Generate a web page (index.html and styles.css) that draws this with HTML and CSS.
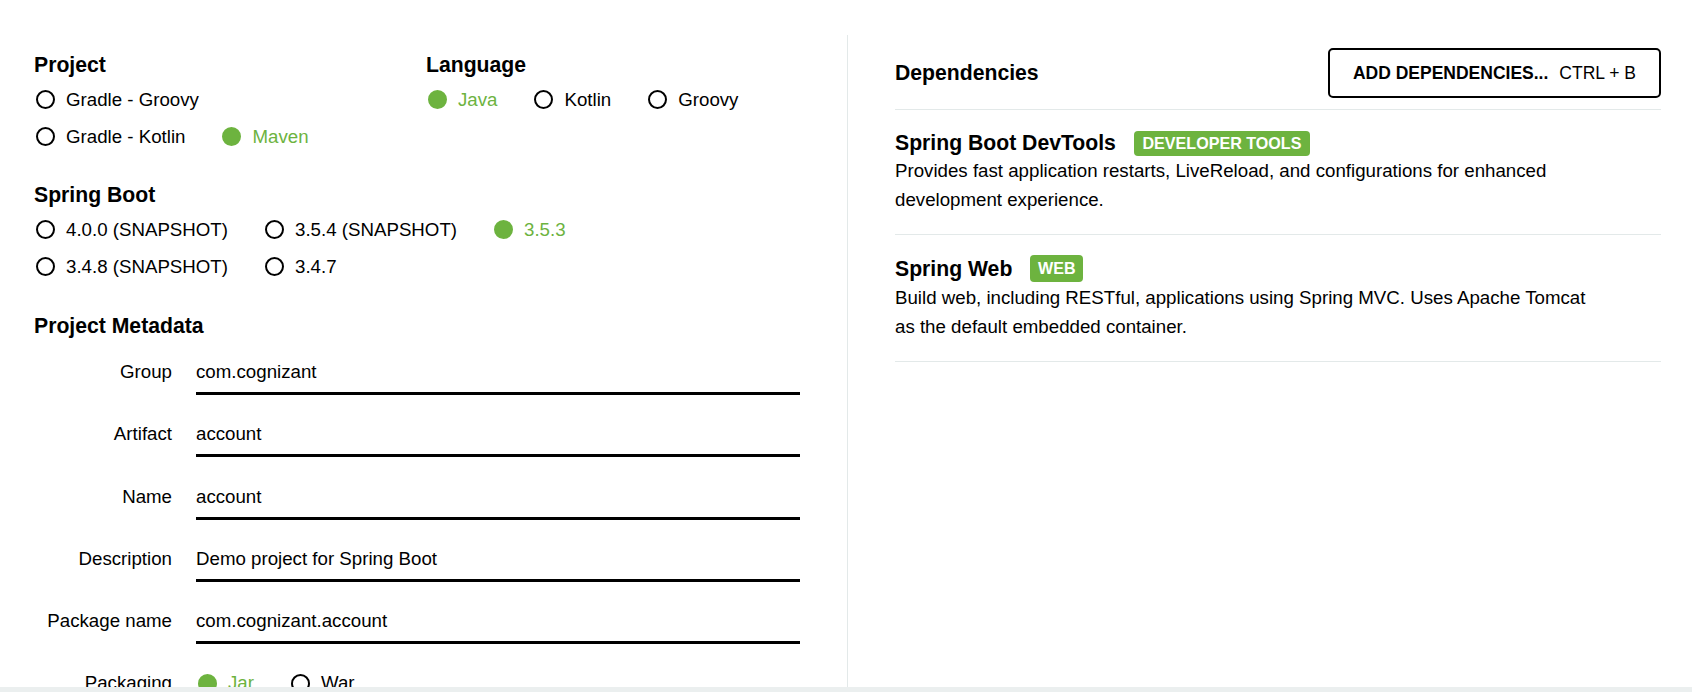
FILE: index.html
```html
<!DOCTYPE html>
<html lang="en">
<head>
<meta charset="utf-8">
<title>Spring Initializr</title>
<link rel="stylesheet" href="styles.css">
</head>
<body>
<div class="page">
  <main class="main">
    <section class="left">
      <div class="top-groups">
        <div class="group group-project">
          <h2 class="heading">Project</h2>
          <div class="opts">
            <span class="radio"><span class="dot"></span><span class="lbl">Gradle - Groovy</span></span>
          </div>
          <div class="opts">
            <span class="radio"><span class="dot"></span><span class="lbl">Gradle - Kotlin</span></span>
            <span class="radio checked"><span class="dot"></span><span class="lbl">Maven</span></span>
          </div>
        </div>
        <div class="group group-lang">
          <h2 class="heading">Language</h2>
          <div class="opts">
            <span class="radio checked"><span class="dot"></span><span class="lbl">Java</span></span>
            <span class="radio"><span class="dot"></span><span class="lbl">Kotlin</span></span>
            <span class="radio"><span class="dot"></span><span class="lbl">Groovy</span></span>
          </div>
        </div>
      </div>

      <div class="group group-boot">
        <h2 class="heading">Spring Boot</h2>
        <div class="opts">
          <span class="radio"><span class="dot"></span><span class="lbl">4.0.0 (SNAPSHOT)</span></span>
          <span class="radio"><span class="dot"></span><span class="lbl">3.5.4 (SNAPSHOT)</span></span>
          <span class="radio checked"><span class="dot"></span><span class="lbl">3.5.3</span></span>
        </div>
        <div class="opts">
          <span class="radio"><span class="dot"></span><span class="lbl">3.4.8 (SNAPSHOT)</span></span>
          <span class="radio"><span class="dot"></span><span class="lbl">3.4.7</span></span>
        </div>
      </div>

      <div class="group group-meta">
        <h2 class="heading">Project Metadata</h2>
        <div class="meta-row"><span class="meta-label">Group</span><span class="field">com.cognizant</span></div>
        <div class="meta-row"><span class="meta-label">Artifact</span><span class="field">account</span></div>
        <div class="meta-row"><span class="meta-label">Name</span><span class="field">account</span></div>
        <div class="meta-row"><span class="meta-label">Description</span><span class="field">Demo project for Spring Boot</span></div>
        <div class="meta-row"><span class="meta-label">Package name</span><span class="field">com.cognizant.account</span></div>
        <div class="meta-row"><span class="meta-label">Packaging</span>
          <div class="opts opts-pack">
            <span class="radio checked"><span class="dot"></span><span class="lbl">Jar</span></span>
            <span class="radio"><span class="dot"></span><span class="lbl">War</span></span>
          </div>
        </div>
      </div>
    </section>

    <section class="right">
      <div class="dep-head">
        <h2 class="heading">Dependencies</h2>
        <button class="add-btn" type="button"><strong>ADD DEPENDENCIES...</strong><span class="kbd">CTRL + B</span></button>
      </div>
      <div class="dep">
        <div class="dep-title"><h3>Spring Boot DevTools</h3><span class="badge">DEVELOPER TOOLS</span></div>
        <p class="dep-desc">Provides fast application restarts, LiveReload, and configurations for enhanced development experience.</p>
      </div>
      <div class="dep">
        <div class="dep-title dep-title-web"><h3>Spring Web</h3><span class="badge badge-web">WEB</span></div>
        <p class="dep-desc">Build web, including RESTful, applications using Spring MVC. Uses Apache Tomcat as the default embedded container.</p>
      </div>
    </section>
  </main>
  <div class="footer-bar"></div>
</div>
</body>
</html>
```

FILE: styles.css
```css
* { box-sizing: border-box; }

html, body {
  margin: 0;
  padding: 0;
  background: #fff;
}

body {
  font-family: "Liberation Sans", Arial, sans-serif;
  font-size: 18.7px;
  color: #000;
}

.page {
  width: 1692px;
  height: 692px;
  display: flex;
  flex-direction: column;
  overflow: hidden;
}

.main {
  display: flex;
  height: 687px;
  overflow: hidden;
}

.footer-bar {
  height: 5px;
  background: #ebefef;
}

/* ---------- left ---------- */
.left {
  width: 847px;
  flex: none;
  padding: 53px 47px 0 34px;
}

.heading {
  margin: 0 0 4px;
  font-size: 21.2px;
  font-weight: bold;
  line-height: 24px;
}

.top-groups {
  display: flex;
}

.group-project {
  width: 392px;
}

.opts {
  display: flex;
  height: 37px;
  align-items: center;
}

.radio {
  display: inline-flex;
  align-items: center;
  margin-right: 35px;
  line-height: 37px;
  white-space: nowrap;
}

.dot {
  width: 19px;
  height: 19px;
  margin: 0 11px 0 2px;
  border: 2px solid #000;
  border-radius: 50%;
  flex: none;
}

.radio.checked .dot {
  background: #6db33f;
  border-color: #6db33f;
}

.radio.checked .lbl {
  color: #6db33f;
}

.group-boot {
  margin-top: 28px;
}

.group-meta {
  margin-top: 29px;
}

.group-meta .heading {
  margin-bottom: 20px;
}

.meta-row {
  display: flex;
  align-items: flex-start;
  margin-top: 25.25px;
}

.group-meta .heading + .meta-row {
  margin-top: 0;
}

.meta-label {
  width: 138px;
  margin-right: 24px;
  text-align: right;
  line-height: 28px;
  flex: none;
}

.field {
  width: 604px;
  line-height: 28px;
  padding-bottom: 6px;
  border-bottom: 3px solid #000;
  white-space: nowrap;
}

.opts-pack {
  height: 28px;
}

.opts-pack .radio {
  line-height: 28px;
}

/* ---------- right ---------- */
.right {
  flex: 1;
  margin-top: 35px;
  border-left: 1px solid #e3e9e9;
  padding: 13px 31px 0 47px;
}

.dep-head {
  display: flex;
  justify-content: space-between;
  align-items: center;
  padding-bottom: 11px;
  border-bottom: 1px solid #e3e9e9;
}

.dep-head .heading {
  margin: 0;
}

.add-btn {
  display: flex;
  align-items: center;
  height: 50px;
  padding: 0 23px;
  border: 2px solid #000;
  border-radius: 5px;
  background: #fff;
  color: #000;
  font-family: "Liberation Sans", Arial, sans-serif;
  font-size: 17.5px;
  cursor: pointer;
}

.add-btn strong {
  font-weight: bold;
}

.kbd {
  margin-left: 11px;
}

.dep {
  padding: 19px 0 19.5px;
  border-bottom: 1px solid #e3e9e9;
}

.dep-title {
  display: flex;
  align-items: center;
  min-height: 28px;
}

.dep-title-web {
  min-height: 30.5px;
}

.dep-title h3 {
  margin: 0 18px 0 0;
  font-size: 21.2px;
  font-weight: bold;
  line-height: 28px;
}

.badge {
  display: inline-block;
  height: 25px;
  padding: 0 8.6px;
  border-radius: 4px;
  background: #6db33f;
  color: #fff;
  font-size: 16.1px;
  font-weight: bold;
  line-height: 25px;
}

.badge-web {
  height: 27px;
  line-height: 27px;
  padding: 0 7.7px;
}

.dep-desc {
  margin: 0;
  max-width: 700px;
  line-height: 28.5px;
}
```
